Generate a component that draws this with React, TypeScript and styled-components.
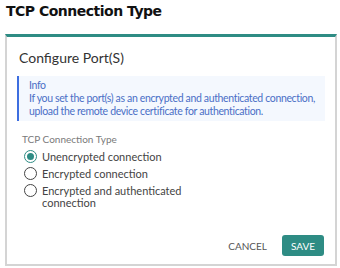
import { createGlobalStyle } from 'styled-components';
import styled from 'styled-components';

const GlobalStyle = createGlobalStyle`
  html, body {
    margin: 0;
    padding: 0;
    background: #fff;
  }
  body {
    font-family: Lato, 'Noto Sans', sans-serif;
  }
`;

const Page = styled.div`
  width: 340px;
  height: 268px;
  box-sizing: border-box;
  padding: 0 3px 0 5px;
`;

const Title = styled.h1`
  margin: 0;
  padding: 1px 0 0 1px;
  height: 33px;
  font-family: 'DejaVu Sans', Verdana, sans-serif;
  font-size: 14px;
  letter-spacing: -0.5px;
  font-weight: bold;
  color: #111;
  line-height: 20px;
`;

const Card = styled.div`
  box-sizing: border-box;
  height: 232px;
  border: 2px solid #d4d4d4;
  border-top: 3px solid #2e8c84;
  display: flex;
  flex-direction: column;
  padding: 0 10px 8px 10px;
`;

const CardTitle = styled.h2`
  margin: 0;
  padding: 12px 0 0 2px;
  height: 39px;
  box-sizing: border-box;
  font-size: 14px;
  line-height: 17px;
  font-weight: 400;
  color: #333;
`;

const InfoBox = styled.div`
  background: #f4f8fe;
  border-left: 2px solid #3d6ee0;
  padding: 3px 4px 3px 10px;
  font-size: 10.5px;
  letter-spacing: -0.35px;
  line-height: 13px;
  color: #4a6fc6;
`;

const FieldLabel = styled.div`
  margin: 12px 0 4px 5px;
  font-size: 10px;
  line-height: 13px;
  color: #7a7a7a;
`;

const RadioList = styled.div`
  display: flex;
  flex-direction: column;
  gap: 4px;
  padding-left: 7px;
`;

const RadioRow = styled.label`
  display: flex;
  align-items: flex-start;
  gap: 5px;
  font-size: 11px;
  line-height: 13px;
  color: #444;
`;

const RadioCircle = styled.span<{ $checked?: boolean }>`
  flex: none;
  box-sizing: border-box;
  width: 13px;
  height: 13px;
  border-radius: 50%;
  border: 1.5px solid ${(p) => (p.$checked ? '#2e8c84' : '#444')};
  display: flex;
  align-items: center;
  justify-content: center;
  &::after {
    content: '';
    display: ${(p) => (p.$checked ? 'block' : 'none')};
    width: 7px;
    height: 7px;
    border-radius: 50%;
    background: #2e8c84;
  }
`;

const RadioText = styled.span`
  max-width: 160px;
  line-height: 12px;
  padding-top: 0.5px;
`;

const Footer = styled.div`
  margin-top: auto;
  display: flex;
  justify-content: flex-end;
  align-items: center;
  gap: 13px;
  padding-right: 1px;
`;

const Button = styled.button<{ $primary?: boolean }>`
  font-family: Lato, 'Noto Sans', sans-serif;
  font-size: 10px;
  border: none;
  border-radius: 3px;
  height: 21px;
  padding: 0 ${(p) => (p.$primary ? '9px' : '2px')};
  background: ${(p) => (p.$primary ? '#2e8c84' : 'transparent')};
  color: ${(p) => (p.$primary ? '#fff' : '#555')};
`;

const options = [
  { label: 'Unencrypted connection', checked: true },
  { label: 'Encrypted connection', checked: false },
  { label: 'Encrypted and authenticated connection', checked: false },
];

export default function App() {
  return (
    <Page>
      <GlobalStyle />
      <Title>TCP Connection Type</Title>
      <Card>
        <CardTitle>Configure Port(S)</CardTitle>
        <InfoBox>
          Info
          <br />
          If you set the port(s) as an encrypted and authenticated connection,
          upload the remote device certificate for authentication.
        </InfoBox>
        <FieldLabel>TCP Connection Type</FieldLabel>
        <RadioList>
          {options.map((o) => (
            <RadioRow key={o.label}>
              <RadioCircle $checked={o.checked} />
              <RadioText>{o.label}</RadioText>
            </RadioRow>
          ))}
        </RadioList>
        <Footer>
          <Button>CANCEL</Button>
          <Button $primary>SAVE</Button>
        </Footer>
      </Card>
    </Page>
  );
}
